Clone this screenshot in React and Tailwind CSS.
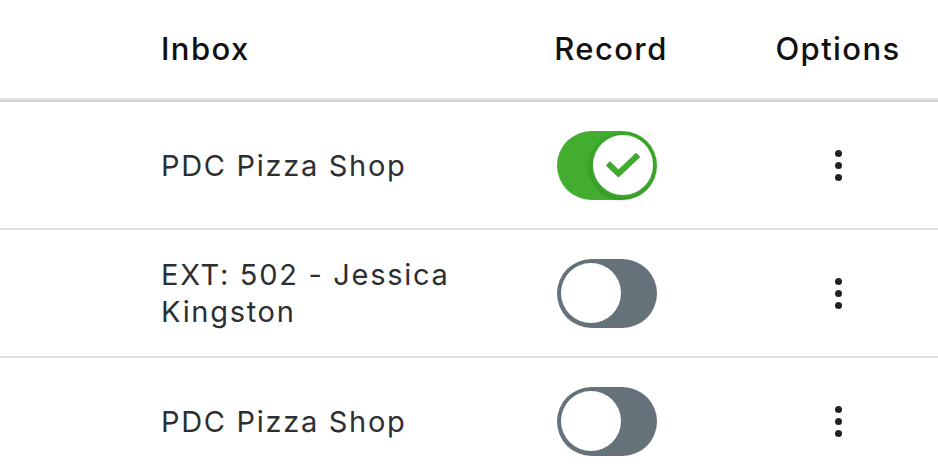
const rows = [
  { name: "PDC Pizza Shop", on: true },
  { name: "EXT: 502 - Jessica Kingston", on: false },
  { name: "PDC Pizza Shop", on: false },
];

const font = { fontFamily: "Inter, 'Noto Sans', sans-serif" };

const Toggle = ({ on }) =>
  on ? (
    <div className="relative w-[100px] h-[69px] rounded-full bg-[#42ad2f]">
      <div className="absolute right-[1px] top-[1px] w-[66px] h-[66px] rounded-full bg-white border-[3px] border-[#3aa52a] flex items-center justify-center shadow-[-1px_2px_3px_rgba(0,0,0,0.15)]">
        <svg width="34" height="24" viewBox="0 0 34 24" fill="none">
          <path d="M4 12.5l8.5 8L30 4" stroke="#3fab2e" strokeWidth="6" strokeLinecap="square" />
        </svg>
      </div>
    </div>
  ) : (
    <div className="relative w-[100px] h-[69px] rounded-full bg-[#66727a]">
      <div className="absolute left-[4px] top-[4.5px] w-[60px] h-[60px] rounded-full bg-white" />
    </div>
  );

const Dots = () => (
  <div className="flex flex-col items-center gap-[5px]">
    <span className="w-[7px] h-[7px] rounded-full bg-[#1f2328]" />
    <span className="w-[7px] h-[7px] rounded-full bg-[#1f2328]" />
    <span className="w-[7px] h-[7px] rounded-full bg-[#1f2328]" />
  </div>
);

export default function App() {
  return (
    <div className="w-[938px] h-[474px] overflow-hidden bg-white" style={font}>
      <div className="h-[98px] grid grid-cols-[359px_174px_1fr_200px] items-center pl-[161px] text-[31px] font-medium text-[#111] tracking-[1.4px]">
        <div>Inbox</div>
        <div className="text-center pl-[8px]">Record</div>
        <div />
        <div className="text-center">Options</div>
      </div>
      <div className="h-[2px] bg-[#e4e4e4]" />
      <div className="h-[2px] bg-[#cfd1d4]" />
      {rows.map((r, i) => (
        <div key={i}>
          <div className="h-[126px] grid grid-cols-[359px_174px_1fr_200px] items-center pl-[161px] text-[29px] leading-[37px] text-[#2c2f33] tracking-[1.7px]">
            <div className="pr-[40px]">{r.name}</div>
            <div className="flex justify-center">
              <Toggle on={r.on} />
            </div>
            <div />
            <div className="flex justify-center">
              <Dots />
            </div>
          </div>
          {i < rows.length - 1 && <div className="h-[2px] bg-[#e2e2e2]" />}
        </div>
      ))}
    </div>
  );
}
